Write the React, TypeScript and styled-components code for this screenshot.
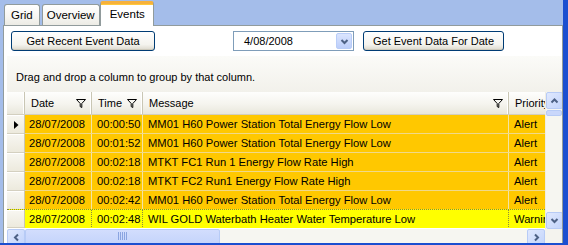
import React from 'react';
import styled, { createGlobalStyle, css } from 'styled-components';

const Global = createGlobalStyle`
  html, body { margin: 0; padding: 0; }
  body { font-family: "Liberation Sans", Arial, sans-serif; font-size: 11px; color: #000; background: #fff; }
  * { box-sizing: border-box; }
`;

const Window = styled.div`
  width: 568px;
  height: 245px;
  background: #a4bdea;
  border-right: 5px solid #1b4fd0;
  border-bottom: 2px solid #1b4fd0;
  padding-left: 3px;
  display: flex;
  flex-direction: column;
  overflow: hidden;
`;

const TabStrip = styled.div`
  height: 25px;
  display: flex;
  align-items: flex-end;
  padding-left: 1px;
  gap: 2px;
`;

const Tab = styled.div<{ $active?: boolean; $px?: number }>`
  height: 21px;
  padding: 0 ${(p) => p.$px ?? 6}px 1px ${(p) => p.$px ?? 6}px;
  display: flex;
  align-items: center;
  border: 1px solid #919b9c;
  border-bottom: none;
  border-radius: 3px 3px 0 0;
  background: linear-gradient(#ffffff, #f6f5f1 60%, #ecebe5);
  font-size: 11.5px;
  ${(p) =>
    p.$active &&
    css`
      height: 25px;
      margin-bottom: -1px;
      margin-left: -2px;
      padding: 0 8px 3px 9px;
      position: relative;
      z-index: 1;
      background: #fff;
      border-top: 3px solid #f6b13b;
      box-shadow: inset 0 1px 0 #ffc83c;
      border-radius: 3px 3px 0 0;
    `}
`;

const Panel = styled.div`
  flex: 1;
  min-height: 0;
  background: #fff;
  border: 1px solid #919b9c;
  border-bottom: none;
  padding: 5px 0 0 7px;
  display: flex;
  flex-direction: column;
  overflow: hidden;
`;

const Toolbar = styled.div`
  height: 20px;
  display: flex;
  align-items: stretch;
`;

const XPButton = styled.button<{ $w: number; $ml?: number }>`
  width: ${(p) => p.$w}px;
  margin-left: ${(p) => p.$ml ?? 0}px;
  height: 20px;
  padding: 0;
  border: 1px solid #003c74;
  border-radius: 3px;
  background: linear-gradient(#ffffff, #f4f3ee 70%, #dcd8cc);
  box-shadow: inset 0 -1px 0 #cdc9bb;
  font-family: "Liberation Sans", Arial, sans-serif;
  font-size: 11px;
  color: #000;
  text-align: center;
`;

const DatePicker = styled.div`
  width: 121px;
  margin-left: 78px;
  border: 1px solid #7f9db9;
  background: #fff;
  display: flex;
  align-items: center;
  padding: 0 1px 0 10px;
  font-size: 11px;
`;

const DateText = styled.span`
  flex: 1;
`;

const ComboButton = styled.div`
  width: 16px;
  height: 16px;
  border: 1px solid #b9cdf8;
  border-radius: 2px;
  background: linear-gradient(#dbe5fe, #bccefa);
  display: flex;
  align-items: center;
  justify-content: center;
`;

const GridArea = styled.div`
  flex: 1;
  min-height: 0;
  margin: 5px 0 0 -4px;
  display: flex;
  flex-direction: column;
`;

const GroupPanel = styled.div`
  height: 36px;
  flex: none;
  background: linear-gradient(#fbfbf8, #f2f1eb);
  display: flex;
  align-items: center;
  padding: 6px 0 0 9px;
  font-size: 11px;
`;

const Body = styled.div`
  display: grid;
  grid-template-columns: 538px 17px;
  grid-template-rows: 137px 17px;
`;

const Table = styled.div`
  overflow: hidden;
  display: flex;
  flex-direction: column;
`;

const cols = '18px 67px 51px 366px 70px';

const HeaderRow = styled.div`
  display: grid;
  grid-template-columns: ${cols};
  height: 23px;
  background: linear-gradient(#fefefd, #f5f4ee 55%, #e9e7dc);
  border-bottom: 1px solid #d3cfbf;
`;

const HeaderCell = styled.div`
  display: flex;
  align-items: center;
  justify-content: space-between;
  padding: 0 5px 0 6px;
  border-right: 1px solid #c9c6b4;
  box-shadow: inset -1px 0 0 #ffffff;
  font-size: 11px;
  white-space: nowrap;
  overflow: hidden;
`;

const DataRow = styled.div<{ $bg: string; $focus?: boolean }>`
  display: grid;
  grid-template-columns: ${cols};
  height: 19px;
  background: ${(p) => p.$bg};
  border-bottom: 1px solid ${(p) => (p.$focus ? 'transparent' : '#f0d98a')};
  ${(p) =>
    p.$focus &&
    css`
      border-top: 1px dotted #8a8a40;
      margin-top: -1px;
    `}
`;

const Selector = styled.div`
  background: linear-gradient(#f8f7f2, #ece9dc);
  border-right: 1px solid #c9c6b4;
  box-shadow: inset 0 1px 0 #fff, inset 0 -1px 0 #d4d0c0;
  margin-bottom: -1px;
  display: flex;
  align-items: center;
  padding-left: 7px;
`;

const Cell = styled.div<{ $focus?: boolean; $pl?: number }>`
  display: flex;
  align-items: center;
  padding-left: ${(p) => p.$pl ?? 5}px;
  font-size: 11.2px;
  white-space: nowrap;
  overflow: hidden;
  border-right: 1px ${(p) => (p.$focus ? 'dotted #8a8a40' : 'solid #f3e3a4')};
`;

const VScroll = styled.div`
  background: #f6f6f1;
  display: flex;
  flex-direction: column;
  justify-content: space-between;
  border-left: 1px solid #eeede5;
`;

const ScrollButton = styled.div<{ $w?: number; $h?: number }>`
  width: ${(p) => p.$w ?? 17}px;
  height: ${(p) => p.$h ?? 17}px;
  flex: none;
  border: 1px solid #b7cbf6;
  border-radius: 2px;
  background: linear-gradient(135deg, #dfe8fe, #c3d4fb);
  display: flex;
  align-items: center;
  justify-content: center;
`;

const VThumbTop = styled.div`
  height: 6px;
  margin-top: 1px;
  border: 1px solid #b7cbf6;
  border-radius: 2px;
  background: #c9d7fb;
`;

const VTrack = styled.div`
  flex: 1;
  display: flex;
  flex-direction: column;
`;

const HScroll = styled.div`
  display: flex;
  background: #f6f6f1;
`;

const HThumb = styled.div`
  width: 195px;
  border: 1px solid #b7cbf6;
  border-radius: 2px;
  background: linear-gradient(#d2ddfd, #c3d3fb);
  display: flex;
  align-items: center;
  justify-content: center;
  padding-bottom: 3px;
`;

const HTrack = styled.div`
  flex: 1;
`;

const Corner = styled.div`
  background: #f4f3ee;
`;

const Funnel = () => (
  <svg width="10" height="10" viewBox="0 0 10 10">
    <path d="M0.5 1.5 H9.5 L5.8 5.5 V9.5 L4.2 8.6 V5.5 Z" fill="none" stroke="#000" strokeWidth="1" strokeLinejoin="miter" />
  </svg>
);

const Chevron = ({ dir }: { dir: 'up' | 'down' | 'left' | 'right' }) => {
  const pts = {
    up: '1.5,6.5 4.5,3.5 7.5,6.5',
    down: '1.5,3 4.5,6 7.5,3',
    left: '6,1.5 3,4.5 6,7.5',
    right: '3,1.5 6,4.5 3,7.5',
  }[dir];
  return (
    <svg width="9" height="9" viewBox="0 0 9 9">
      <polyline points={pts} fill="none" stroke="#4d6185" strokeWidth="2" />
    </svg>
  );
};

const Grip = () => (
  <svg width="9" height="8" viewBox="0 0 9 8">
    {[0.5, 2.5, 4.5, 6.5, 8.5].map((x) => (
      <line key={x} x1={x} y1="0" x2={x} y2="8" stroke="#8aa4e0" strokeWidth="1" />
    ))}
  </svg>
);

const RowArrow = () => (
  <svg width="5" height="8" viewBox="0 0 5 8">
    <polygon points="0,0 4.5,4 0,8" fill="#000" />
  </svg>
);

const rows = [
  { time: '00:00:50', msg: 'MM01 H60 Power Station Total Energy Flow Low', pri: 'Alert' },
  { time: '00:01:52', msg: 'MM01 H60 Power Station Total Energy Flow Low', pri: 'Alert' },
  { time: '00:02:18', msg: 'MTKT FC1 Run 1 Energy Flow Rate High', pri: 'Alert' },
  { time: '00:02:18', msg: 'MTKT FC2 Run1 Energy Flow Rate High', pri: 'Alert' },
  { time: '00:02:42', msg: 'MM01 H60 Power Station Total Energy Flow Low', pri: 'Alert' },
  { time: '00:02:48', msg: 'WIL GOLD Waterbath Heater Water Temperature Low', pri: 'Warning' },
];

export default function App() {
  return (
    <>
      <Global />
      <Window>
        <TabStrip>
          <Tab>Grid</Tab>
          <Tab $px={4}>Overview</Tab>
          <Tab $active>Events</Tab>
        </TabStrip>
        <Panel>
          <Toolbar>
            <XPButton $w={144}>Get Recent Event Data</XPButton>
            <DatePicker>
              <DateText>4/08/2008</DateText>
              <ComboButton>
                <Chevron dir="down" />
              </ComboButton>
            </DatePicker>
            <XPButton $w={141} $ml={9}>Get Event Data For Date</XPButton>
          </Toolbar>
          <GridArea>
            <GroupPanel>Drag and drop a column to group by that column.</GroupPanel>
            <Body>
              <Table>
                <HeaderRow>
                  <HeaderCell />
                  <HeaderCell>
                    Date <Funnel />
                  </HeaderCell>
                  <HeaderCell>
                    Time <Funnel />
                  </HeaderCell>
                  <HeaderCell>
                    Message <Funnel />
                  </HeaderCell>
                  <HeaderCell>Priority</HeaderCell>
                </HeaderRow>
                {rows.map((r, i) => {
                  const warn = r.pri === 'Warning';
                  return (
                    <DataRow key={i} $bg={warn ? '#ffff00' : '#ffc800'} $focus={warn}>
                      <Selector>{i === 0 && <RowArrow />}</Selector>
                      <Cell $focus={warn} $pl={4}>28/07/2008</Cell>
                      <Cell $focus={warn}>{r.time}</Cell>
                      <Cell $focus={warn}>{r.msg}</Cell>
                      <Cell $focus={warn}>{r.pri}</Cell>
                    </DataRow>
                  );
                })}
              </Table>
              <VScroll>
                <VTrack>
                  <ScrollButton>
                    <Chevron dir="up" />
                  </ScrollButton>
                  <VThumbTop />
                </VTrack>
                <ScrollButton>
                  <Chevron dir="down" />
                </ScrollButton>
              </VScroll>
              <HScroll>
                <ScrollButton $w={18}>
                  <Chevron dir="left" />
                </ScrollButton>
                <HThumb>
                  <Grip />
                </HThumb>
                <HTrack />
                <ScrollButton $w={18}>
                  <Chevron dir="right" />
                </ScrollButton>
              </HScroll>
              <Corner />
            </Body>
          </GridArea>
        </Panel>
      </Window>
    </>
  );
}
